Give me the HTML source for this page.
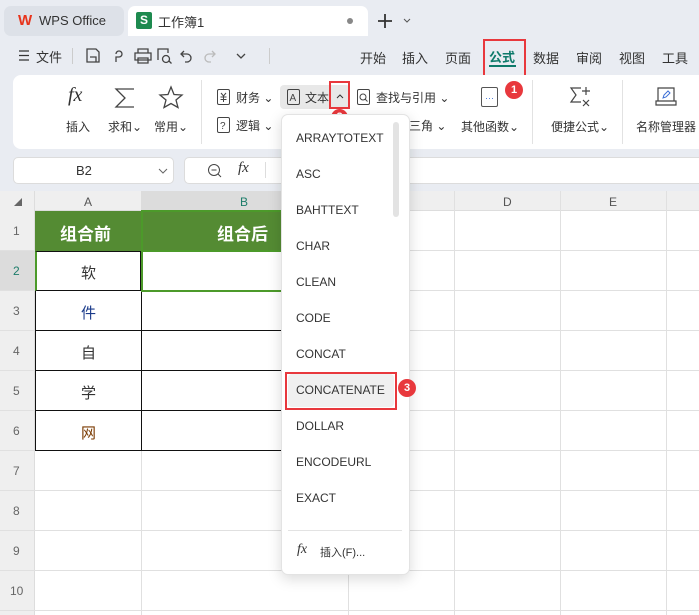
<!DOCTYPE html>
<html><head><meta charset="utf-8"><style>
*{margin:0;padding:0;box-sizing:border-box}
body{width:699px;height:615px;overflow:hidden;background:#e9ecf2;font-family:"Liberation Sans","Noto Sans CJK SC",sans-serif;position:relative;font-size:12px;color:#333}
.a{position:absolute}
.t{position:absolute;white-space:nowrap}
svg{position:absolute;overflow:visible}
</style></head><body>
<!-- tabs -->
<div class="a" style="left:4px;top:6px;width:120px;height:30px;background:#dde1e8;border-radius:7px"></div>
<div class="t" style="left:18px;top:12px;color:#e8341c;font-weight:bold;font-size:15px">W</div>
<div class="t" style="left:39px;top:13px;font-size:13px;color:#333">WPS Office</div>
<div class="a" style="left:128px;top:6px;width:240px;height:30px;background:#fff;border-radius:7px 7px 0 0"></div>
<div class="a" style="left:136px;top:12px;width:16px;height:17px;background:#1d8a4f;border-radius:2px;color:#fff;font-size:12px;font-weight:bold;text-align:center;line-height:16px">S</div>
<div class="t" style="left:158px;top:12px;font-size:13px">工作簿1</div>
<div class="a" style="left:347px;top:18px;width:6px;height:6px;border-radius:3px;background:#888"></div>
<svg style="left:377px;top:13px" width="16" height="16"><path d="M8 1V15M1 8H15" stroke="#333" stroke-width="1.8"/></svg>
<svg style="left:403px;top:18px" width="8" height="5"><path d="M1 1L4 4L7 1" stroke="#555" fill="none"/></svg>
<!-- toolbar row -->
<svg style="left:19px;top:50px" width="10" height="11"><path d="M0 1H10M0 5.5H10M0 10H10" stroke="#333" stroke-width="1.2"/></svg>
<div class="t" style="left:36px;top:47px;font-size:13px">文件</div>
<div class="a" style="left:72px;top:48px;width:1px;height:16px;background:#ccc"></div>
<svg style="left:86px;top:48px" width="170" height="16" fill="none" stroke="#444" stroke-width="1.3">
<path d="M1 1H10L13 4V14H1Z M4 9H10V14"/>
<path d="M30 6a3 3 0 1 1 3 3H30v5"/>
<path d="M52 5V1H62V5 M49 5H65V12H49Z M52 10H62V15H52Z"/>
<path d="M72 12V1H82V5 M80 11m-3.5 0a3.5 3.5 0 1 0 7 0a3.5 3.5 0 1 0 -7 0 M83 13l2.5 2.5"/>
<path d="M98 3l-3 3 3 3 M95 6h6a4 4 0 0 1 0 8h-2"/>
<path stroke="#bbb" d="M126 3l3 3-3 3 M129 6h-6a4 4 0 0 0 0 8h2"/>
<path d="M151 6l4 4 4-4"/>
</svg>
<div class="a" style="left:269px;top:48px;width:1px;height:16px;background:#ccc"></div>
<div class="t" style="left:360px;top:48px;font-size:13px">开始</div>
<div class="t" style="left:402px;top:48px;font-size:13px">插入</div>
<div class="t" style="left:445px;top:48px;font-size:13px">页面</div>
<div class="t" style="left:489px;top:47px;font-size:13px;color:#0d7a6a;font-weight:bold">公式</div>
<div class="a" style="left:489px;top:65px;width:27px;height:2px;background:#0d7a6a"></div>
<div class="a" style="left:483px;top:39px;width:43px;height:38px;border:2px solid #e8383d"></div>
<div class="t" style="left:533px;top:48px;font-size:13px">数据</div>
<div class="t" style="left:576px;top:48px;font-size:13px">审阅</div>
<div class="t" style="left:619px;top:48px;font-size:13px">视图</div>
<div class="t" style="left:662px;top:48px;font-size:13px">工具</div>
<!-- ribbon -->
<div class="a" style="left:13px;top:75px;width:700px;height:74px;background:#fff;border-radius:8px"></div>
<div class="t" style="left:68px;top:84px;font-size:20px;font-style:italic;font-family:'Liberation Serif',serif">fx</div>
<div class="t" style="left:66px;top:118px">插入</div>
<svg style="left:115px;top:87px" width="20" height="22"><path d="M19 2H1L10 11L1 20H19" stroke="#444" fill="none" stroke-width="1.3"/></svg>
<div class="t" style="left:108px;top:118px">求和⌄</div>
<svg style="left:159px;top:86px" width="24" height="22"><path d="M12 1L15 8.5L23 9L17 14L19 21.5L12 17.5L5 21.5L7 14L1 9L9 8.5Z" stroke="#444" fill="none" stroke-width="1.3"/></svg>
<div class="t" style="left:154px;top:118px">常用⌄</div>
<div class="a" style="left:201px;top:80px;width:1px;height:64px;background:#e2e2e2"></div>
<svg style="left:217px;top:89px" width="14" height="16"><rect x="0.5" y="0.5" width="12" height="15" rx="1.5" stroke="#444" fill="none"/><path d="M4 4l2.5 3 2.5-3M3.5 8h6M3.5 10.5h6M6.5 7v6" stroke="#444" fill="none"/></svg>
<div class="t" style="left:236px;top:89px">财务 ⌄</div>
<svg style="left:217px;top:117px" width="14" height="16"><rect x="0.5" y="0.5" width="12" height="15" rx="1.5" stroke="#444" fill="none"/><text x="3" y="12" font-size="10" fill="#444" font-family="Liberation Sans">?</text></svg>
<div class="t" style="left:236px;top:117px">逻辑 ⌄</div>
<div class="a" style="left:280px;top:85px;width:70px;height:24px;background:#e8e8e8;border-radius:4px"></div>
<svg style="left:287px;top:89px" width="14" height="16"><rect x="0.5" y="0.5" width="12" height="15" rx="1.5" stroke="#444" fill="none"/><text x="2.5" y="12" font-size="10" fill="#444" font-family="Liberation Sans">A</text></svg>
<div class="t" style="left:305px;top:89px">文本</div>
<svg style="left:336px;top:94px" width="8" height="5"><path d="M1 4L4 1L7 4" stroke="#333" fill="none"/></svg>
<div class="a" style="left:329px;top:81px;width:21px;height:28px;border:2px solid #e8383d"></div>
<div class="a" style="left:331px;top:109px;width:17px;height:17px;border-radius:9px;background:#e8383d;color:#fff;font-size:11px;font-weight:bold;text-align:center;line-height:17px">2</div>
<svg style="left:357px;top:89px" width="14" height="16"><rect x="0.5" y="0.5" width="12" height="15" rx="1.5" stroke="#444" fill="none"/><circle cx="6" cy="8" r="3" stroke="#444" fill="none"/><path d="M8 10l2.5 2.5" stroke="#444"/></svg>
<div class="t" style="left:376px;top:89px">查找与引用 ⌄</div>
<div class="t" style="left:409px;top:117px">三角 ⌄</div>
<div class="a" style="left:481px;top:87px;width:17px;height:20px;border:1.5px solid #555;border-radius:2px"></div>
<div class="t" style="left:485px;top:93px;color:#3c6fd6;font-size:9px">···</div>
<div class="t" style="left:461px;top:118px">其他函数⌄</div>
<div class="a" style="left:505px;top:81px;width:18px;height:18px;border-radius:9px;background:#e8383d;color:#fff;font-size:11px;font-weight:bold;text-align:center;line-height:18px">1</div>
<div class="a" style="left:532px;top:80px;width:1px;height:64px;background:#e2e2e2"></div>
<svg style="left:570px;top:87px" width="22" height="22"><path d="M11 1H1L6 8L1 15H11 M16 0V8M12 4H20 M13 13L19 19M19 13L13 19" stroke="#444" fill="none" stroke-width="1.2"/></svg>
<div class="t" style="left:551px;top:118px">便捷公式⌄</div>
<div class="a" style="left:622px;top:80px;width:1px;height:64px;background:#e2e2e2"></div>
<svg style="left:656px;top:87px" width="20" height="22"><path d="M2 1H18V14H2Z M0 14H20V18H0Z" stroke="#444" fill="none" stroke-width="1.2"/><path d="M7 11L8 8L12 4L14 6L10 10Z" stroke="#3c6fd6" fill="none"/></svg>
<div class="t" style="left:636px;top:118px">名称管理器</div>
<!-- formula bar -->
<div class="a" style="left:13px;top:157px;width:161px;height:27px;background:#fff;border:1px solid #dcdcdc;border-radius:5px"></div>
<div class="t" style="left:76px;top:163px;font-size:13px">B2</div>
<svg style="left:158px;top:168px" width="10" height="6"><path d="M1 1L5 5L9 1" stroke="#666" fill="none"/></svg>
<div class="a" style="left:184px;top:157px;width:520px;height:27px;background:#fff;border:1px solid #dcdcdc;border-radius:5px"></div>
<svg style="left:207px;top:163px" width="16" height="16"><circle cx="7" cy="7" r="5.5" stroke="#444" fill="none"/><path d="M4.5 7H9.5M11 11L14 14" stroke="#444"/></svg>
<div class="t" style="left:238px;top:160px;font-size:15px;font-style:italic;font-family:'Liberation Serif',serif">fx</div>
<div class="a" style="left:265px;top:162px;width:1px;height:16px;background:#ddd"></div>
<!-- grid -->
<div class="a" style="left:0;top:191px;width:699px;height:424px;background:#fff"></div>
<div class="a" style="left:0;top:191px;width:699px;height:20px;background:#efefef;border-bottom:1px solid #ddd"></div>
<div class="a" style="left:141px;top:191px;width:207px;height:20px;background:#dcdcdc"></div>
<div class="a" style="left:0;top:191px;width:35px;height:424px;background:#efefef;border-right:1px solid #ddd"></div>
<div class="a" style="left:0;top:251px;width:35px;height:40px;background:#dcdcdc"></div>
<div class="t" style="left:14px;top:197px;font-size:8px;color:#666">◢</div>
<div class="t" style="left:84px;top:195px;color:#555">A</div>
<div class="t" style="left:240px;top:195px;color:#1d7d6a">B</div>
<div class="t" style="left:503px;top:195px;color:#555">D</div>
<div class="t" style="left:609px;top:195px;color:#555">E</div>
<div class="a" style="left:141px;top:211px;width:1px;height:404px;background:#e0e0e0"></div>
<div class="a" style="left:348px;top:211px;width:1px;height:404px;background:#e0e0e0"></div>
<div class="a" style="left:454px;top:191px;width:1px;height:424px;background:#e0e0e0"></div>
<div class="a" style="left:560px;top:191px;width:1px;height:424px;background:#e0e0e0"></div>
<div class="a" style="left:666px;top:191px;width:1px;height:424px;background:#e0e0e0"></div>
<div class="a" style="left:0;top:250px;width:699px;height:1px;background:#e0e0e0"></div>
<div class="a" style="left:0;top:290px;width:699px;height:1px;background:#e0e0e0"></div>
<div class="a" style="left:0;top:330px;width:699px;height:1px;background:#e0e0e0"></div>
<div class="a" style="left:0;top:370px;width:699px;height:1px;background:#e0e0e0"></div>
<div class="a" style="left:0;top:410px;width:699px;height:1px;background:#e0e0e0"></div>
<div class="a" style="left:0;top:450px;width:699px;height:1px;background:#e0e0e0"></div>
<div class="a" style="left:0;top:490px;width:699px;height:1px;background:#e0e0e0"></div>
<div class="a" style="left:0;top:530px;width:699px;height:1px;background:#e0e0e0"></div>
<div class="a" style="left:0;top:570px;width:699px;height:1px;background:#e0e0e0"></div>
<div class="a" style="left:0;top:610px;width:699px;height:1px;background:#e0e0e0"></div>
<!-- table -->
<div class="a" style="left:35px;top:211px;width:313px;height:40px;background:#548b33"></div>
<div class="a" style="left:35px;top:251px;width:313px;height:200px;border-left:1px solid #111"></div>
<div class="a" style="left:141px;top:211px;width:1px;height:240px;background:#111"></div>
<div class="a" style="left:35px;top:290px;width:313px;height:1px;background:#111"></div>
<div class="a" style="left:35px;top:330px;width:313px;height:1px;background:#111"></div>
<div class="a" style="left:35px;top:370px;width:313px;height:1px;background:#111"></div>
<div class="a" style="left:35px;top:410px;width:313px;height:1px;background:#111"></div>
<div class="a" style="left:35px;top:450px;width:313px;height:1px;background:#111"></div>
<div class="a" style="left:141px;top:210px;width:210px;height:82px;border:2px solid #4c9a2a;border-bottom:none;border-right:none"></div>
<div class="a" style="left:141px;top:250px;width:210px;height:42px;border:2px solid #4c9a2a;border-right:none"></div>
<div class="a" style="left:35px;top:251px;width:106px;height:40px;border:1px solid #111;border-left:2px solid #4c9a2a"></div>
<div class="t" style="left:60px;top:220px;color:#fff;font-weight:bold;font-size:17px">组合前</div>
<div class="t" style="left:217px;top:220px;color:#fff;font-weight:bold;font-size:17px">组合后</div>
<div class="t" style="left:81px;top:262px;font-size:15px">软</div>
<div class="t" style="left:81px;top:302px;font-size:15px;color:#1a3a8a">件</div>
<div class="t" style="left:81px;top:342px;font-size:15px">自</div>
<div class="t" style="left:81px;top:382px;font-size:15px">学</div>
<div class="t" style="left:81px;top:422px;font-size:15px;color:#7a3a00">网</div>
<div class="t" style="left:13px;top:224px;color:#666">1</div>
<div class="t" style="left:13px;top:264px;color:#1d7d6a">2</div>
<div class="t" style="left:13px;top:304px;color:#666">3</div>
<div class="t" style="left:13px;top:344px;color:#666">4</div>
<div class="t" style="left:13px;top:384px;color:#666">5</div>
<div class="t" style="left:13px;top:424px;color:#666">6</div>
<div class="t" style="left:13px;top:464px;color:#666">7</div>
<div class="t" style="left:13px;top:504px;color:#666">8</div>
<div class="t" style="left:13px;top:544px;color:#666">9</div>
<div class="t" style="left:10px;top:584px;color:#666">10</div>
<!-- dropdown -->
<div class="a" style="left:281px;top:114px;width:129px;height:461px;background:#fff;border-radius:7px;border:1px solid #e3e3e3;box-shadow:0 4px 14px rgba(0,0,0,0.15)"></div>
<div class="a" style="left:393px;top:122px;width:6px;height:95px;background:#e3e3e3;border-radius:3px"></div>
<div class="a" style="left:288px;top:374px;width:106px;height:33px;background:#f0f0f0;border-radius:4px"></div>
<div class="a" style="left:285px;top:372px;width:112px;height:38px;border:2px solid #e8383d"></div>
<div class="a" style="left:398px;top:379px;width:18px;height:18px;border-radius:9px;background:#e8383d;color:#fff;font-size:11px;font-weight:bold;text-align:center;line-height:18px">3</div>
<div class="t" style="left:296px;top:131px">ARRAYTOTEXT</div>
<div class="t" style="left:296px;top:167px">ASC</div>
<div class="t" style="left:296px;top:203px">BAHTTEXT</div>
<div class="t" style="left:296px;top:239px">CHAR</div>
<div class="t" style="left:296px;top:275px">CLEAN</div>
<div class="t" style="left:296px;top:311px">CODE</div>
<div class="t" style="left:296px;top:347px">CONCAT</div>
<div class="t" style="left:296px;top:383px">CONCATENATE</div>
<div class="t" style="left:296px;top:419px">DOLLAR</div>
<div class="t" style="left:296px;top:455px">ENCODEURL</div>
<div class="t" style="left:296px;top:491px">EXACT</div>
<div class="a" style="left:288px;top:530px;width:114px;height:1px;background:#e3e3e3"></div>
<div class="t" style="left:297px;top:542px;font-style:italic;font-family:'Liberation Serif',serif;font-size:14px">fx</div>
<div class="t" style="left:320px;top:544px;font-size:11px">插入(F)...</div>
</body></html>
